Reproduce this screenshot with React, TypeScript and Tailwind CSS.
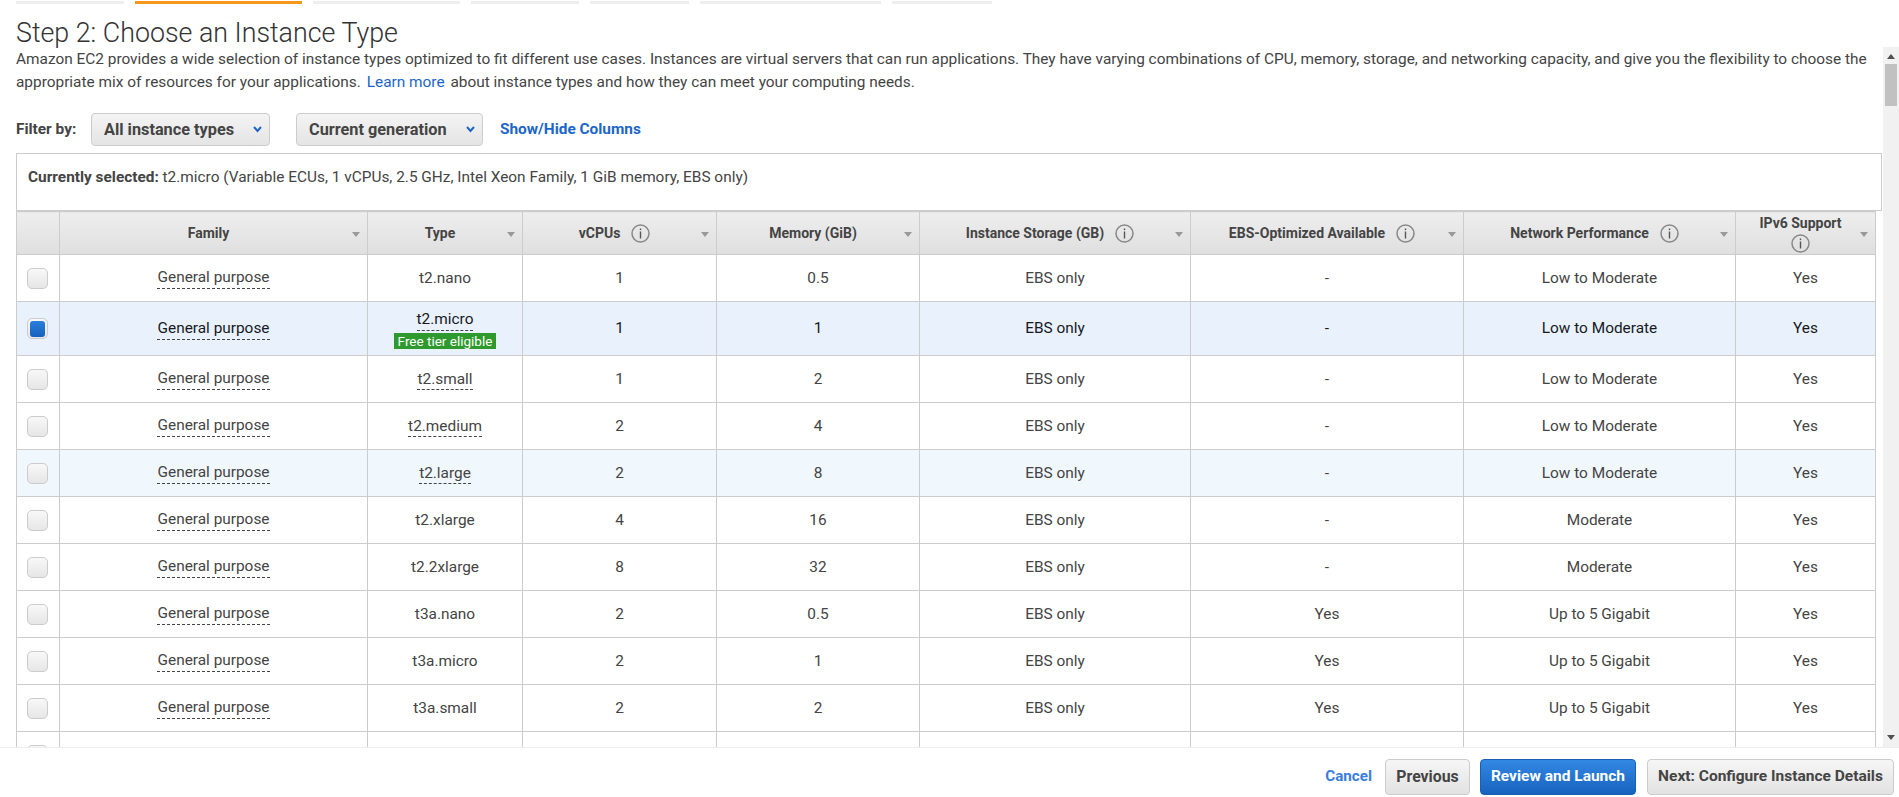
const steps = [
  { w: "w-[108px]", active: false },
  { w: "w-[167px]", active: true },
  { w: "w-[147px]", active: false },
  { w: "w-[108px]", active: false },
  { w: "w-[99px]", active: false },
  { w: "w-[181px]", active: false },
  { w: "w-[100px]", active: false },
];

interface Row {
  type: string;
  vcpus: string;
  mem: string;
  ebs: string;
  net: string;
  dashed?: boolean;
}

const rows: Row[] = [
  { type: "t2.nano", vcpus: "1", mem: "0.5", ebs: "-", net: "Low to Moderate" },
  { type: "t2.micro", vcpus: "1", mem: "1", ebs: "-", net: "Low to Moderate", dashed: true },
  { type: "t2.small", vcpus: "1", mem: "2", ebs: "-", net: "Low to Moderate", dashed: true },
  { type: "t2.medium", vcpus: "2", mem: "4", ebs: "-", net: "Low to Moderate", dashed: true },
  { type: "t2.large", vcpus: "2", mem: "8", ebs: "-", net: "Low to Moderate", dashed: true },
  { type: "t2.xlarge", vcpus: "4", mem: "16", ebs: "-", net: "Moderate" },
  { type: "t2.2xlarge", vcpus: "8", mem: "32", ebs: "-", net: "Moderate" },
  { type: "t3a.nano", vcpus: "2", mem: "0.5", ebs: "Yes", net: "Up to 5 Gigabit" },
  { type: "t3a.micro", vcpus: "2", mem: "1", ebs: "Yes", net: "Up to 5 Gigabit" },
  { type: "t3a.small", vcpus: "2", mem: "2", ebs: "Yes", net: "Up to 5 Gigabit" },
];

function InfoIcon() {
  return (
    <svg width="19" height="19" viewBox="0 0 19 19" className="inline-block shrink-0">
      <ellipse cx="9.5" cy="9.5" rx="8.5" ry="8.5" fill="none" stroke="#888" strokeWidth="1.5" />
      <rect x="8.8" y="7.5" width="1.4" height="7" fill="#555" />
      <rect x="8.8" y="4.5" width="1.4" height="1.6" fill="#555" />
    </svg>
  );
}

function Caret() {
  return (
    <svg width="8" height="5" viewBox="0 0 8 5" className="absolute right-[7px] top-[20px]">
      <polygon points="0,0 8,0 4,5" fill="#999" />
    </svg>
  );
}

function Chevron() {
  return (
    <svg width="9" height="7" viewBox="0 0 9 7" className="absolute right-[7px] top-[12px]">
      <polyline points="1,1 4.5,5 8,1" fill="none" stroke="#1b66c9" strokeWidth="2" />
    </svg>
  );
}

function Th({ w, label, info, caret = true, wrap }: { w: string; label?: string; info?: boolean; caret?: boolean; wrap?: boolean }) {
  return (
    <th className={`${w} relative border border-[#ccc] bg-gradient-to-b from-[#eeeeee] to-[#dfdfdf] p-0 text-[14px] font-bold text-[#444]`}>
      {wrap ? (
        <div className="flex flex-col items-center pr-[10px] leading-[21px]">
          <span>{label}</span>
          <InfoIcon />
        </div>
      ) : label ? (
        <div className="flex items-center justify-center gap-[11px] pr-[10px]">
          <span>{label}</span>
          {info && <InfoIcon />}
        </div>
      ) : null}
      {caret && <Caret />}
    </th>
  );
}

function Checkbox({ checked }: { checked?: boolean }) {
  return (
    <div className="ml-[10px] flex h-[21px] w-[21px] items-center justify-center rounded-[5px] border border-[#ccc] bg-gradient-to-b from-[#f8f8f8] to-[#e6e6e6]">
      {checked && <div className="h-[16px] w-[15px] rounded-[3px] bg-gradient-to-b from-[#2a7fdc] to-[#1661bd]" />}
    </div>
  );
}

const td = "border border-[#ccc] p-0 text-center";

export default function App() {
  return (
    <div className="flex h-[797px] w-[1899px] flex-col overflow-hidden bg-white font-['Roboto',sans-serif] text-[15.4px] text-[#444]">
      <header className="h-[47px] shrink-0 pl-[16px]">
        <div className="flex gap-[11px] pt-[1px]">
          {steps.map((s, i) => (
            <div key={i} className={`h-[3px] ${s.w} ${s.active ? "bg-[#f7981d]" : "bg-[#eeeeee]"}`} />
          ))}
        </div>
        <h1 className="mt-[14px] text-[26.8px] font-light leading-[30px] text-[#333]">Step 2: Choose an Instance Type</h1>
      </header>

      <div className="flex min-h-0 flex-1">
        <main className="min-w-0 flex-1 overflow-hidden pl-[16px]">
          <p className="pr-[10px] pt-[1px] leading-[23px]">
            Amazon EC2 provides a wide selection of instance types optimized to fit different use cases. Instances are virtual servers that can run applications. They have varying combinations of CPU, memory, storage, and networking capacity, and give you the flexibility to choose the appropriate mix of resources for your applications.{" "}
            <a className="mx-[2px] text-[#1b66c9]">Learn more</a>{" "}
            about instance types and how they can meet your computing needs.
          </p>

          <div className="mt-[19px] flex items-center">
            <span className="w-[75px] pt-[1px] font-bold">Filter by:</span>
            <div className="relative flex h-[33px] w-[179px] items-center rounded-[4px] border border-[#ccc] bg-gradient-to-b from-[#f4f4f4] to-[#e4e4e4] pl-[12px] pt-[1px] text-[16.3px] font-bold">
              All instance types
              <Chevron />
            </div>
            <div className="relative ml-[26px] flex h-[33px] w-[187px] items-center rounded-[4px] border border-[#ccc] bg-gradient-to-b from-[#f4f4f4] to-[#e4e4e4] pl-[12px] pt-[1px] text-[16.3px] font-bold">
              Current generation
              <Chevron />
            </div>
            <a className="ml-[17px] pt-[1px] text-[15.4px] font-bold text-[#1b66c9]">Show/Hide Columns</a>
          </div>

          <div className="mt-[7px] h-[58px] w-[1866px] border border-[#ccc] px-[11px] pt-[13px] leading-[20px]">
            <b>Currently selected:</b> t2.micro (Variable ECUs, 1 vCPUs, 2.5 GHz, Intel Xeon Family, 1 GiB memory, EBS only)
          </div>

          <table className="w-[1859px] table-fixed border-collapse">
            <thead>
              <tr className="h-[43px]">
                <Th w="w-[43px]" caret={false} />
                <Th w="w-[308px]" label="Family" />
                <Th w="w-[155px]" label="Type" />
                <Th w="w-[194px]" label="vCPUs" info />
                <Th w="w-[203px]" label="Memory (GiB)" />
                <Th w="w-[271px]" label="Instance Storage (GB)" info />
                <Th w="w-[273px]" label="EBS-Optimized Available" info />
                <Th w="w-[272px]" label="Network Performance" info />
                <Th w="w-[140px]" label="IPv6 Support" wrap />
              </tr>
            </thead>
            <tbody>
              {rows.map((r) => {
                const selected = r.type === "t2.micro";
                const hovered = r.type === "t2.large";
                const cell = selected ? td : `${td} pt-[2px]`;
                return (
                  <tr
                    key={r.type}
                    className={
                      selected
                        ? "h-[54px] bg-[#e9f2fc] text-[#16191f]"
                        : hovered
                          ? "h-[47px] bg-[#f0f7fd]"
                          : "h-[47px]"
                    }
                  >
                    <td className="border border-[#ccc] p-0">
                      <Checkbox checked={selected} />
                    </td>
                    <td className={td}>
                      <span className="border-b border-dashed border-[#444] pb-[2px]">General purpose</span>
                    </td>
                    <td className={cell}>
                      <div className={selected ? "flex flex-col items-center pt-[1px]" : "flex flex-col items-center"}>
                        <span className={r.dashed ? `border-b border-dashed border-[#444] pb-[1px] ${selected ? "leading-[19px]" : "leading-[17px]"}` : ""}>{r.type}</span>
                        {selected && (
                          <span className="mt-[2px] bg-[#2e9a2e] px-[4px] text-[13.5px] leading-[16px] text-white">Free tier eligible</span>
                        )}
                      </div>
                    </td>
                    <td className={cell}>{r.vcpus}</td>
                    <td className={cell}>{r.mem}</td>
                    <td className={cell}>EBS only</td>
                    <td className={cell}>{r.ebs}</td>
                    <td className={cell}>{r.net}</td>
                    <td className={cell}>Yes</td>
                  </tr>
                );
              })}
              <tr className="h-[47px]">
                <td className="border border-[#ccc] p-0">
                  <Checkbox />
                </td>
                <td className={td} />
                <td className={td} />
                <td className={td} />
                <td className={td} />
                <td className={td} />
                <td className={td} />
                <td className={td} />
                <td className={td} />
              </tr>
            </tbody>
          </table>
        </main>

        <div className="flex w-[16px] shrink-0 flex-col items-center bg-[#f1f1f1]">
          <svg width="8" height="5" viewBox="0 0 8 5" className="mt-[7px]">
            <polygon points="0,5 8,5 4,0" fill="#505050" />
          </svg>
          <div className="mt-[5px] h-[42px] w-[12px] bg-[#c1c1c1]" />
          <svg width="8" height="5" viewBox="0 0 8 5" className="mb-[7px] mt-auto">
            <polygon points="0,0 8,0 4,5" fill="#505050" />
          </svg>
        </div>
      </div>

      <footer className="flex h-[50px] shrink-0 items-start justify-end border-t border-[#eeeeee] pr-[5px] pt-[11px] text-[15.5px]">
        <a className="mr-[13px] mt-[6px] text-[15.2px] font-bold text-[#3b7ddd]">Cancel</a>
        <button className="h-[36px] w-[85px] rounded-[4px] border border-[#ccc] bg-gradient-to-b from-[#f6f6f6] to-[#e2e2e2] text-[15.8px] font-bold text-[#444]">Previous</button>
        <button className="ml-[10px] h-[36px] w-[156px] rounded-[4px] border border-[#1a5fb4] bg-gradient-to-b from-[#3288e4] to-[#1763bd] font-bold text-white">Review and Launch</button>
        <button className="ml-[11px] h-[36px] w-[247px] rounded-[4px] border border-[#ccc] bg-gradient-to-b from-[#f6f6f6] to-[#e2e2e2] font-bold text-[#444]">Next: Configure Instance Details</button>
      </footer>
    </div>
  );
}
